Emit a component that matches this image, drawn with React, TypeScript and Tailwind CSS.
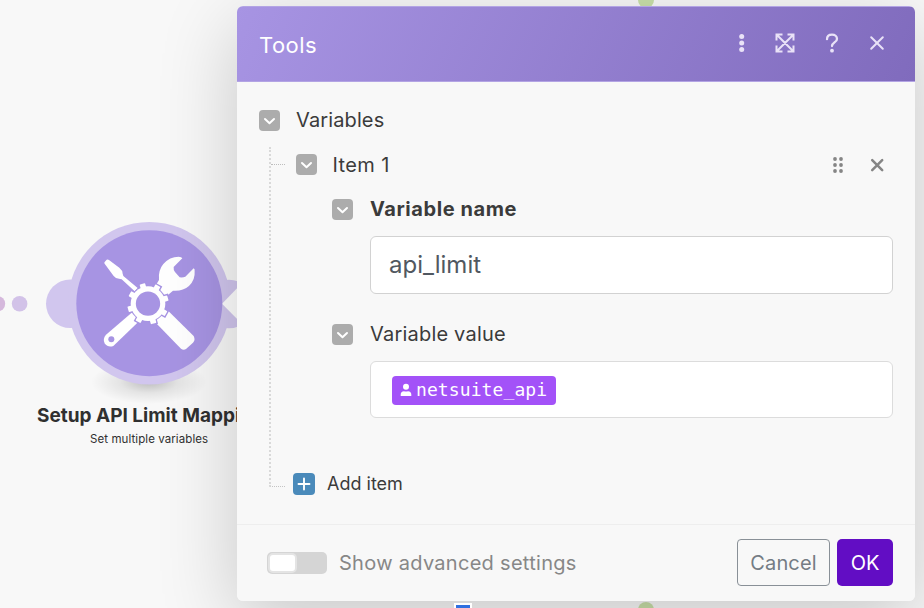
import type { ReactNode } from 'react';

const teeth = [-106, -61, -16, 29, 74, 119, 164, 209];

function Gear() {
  return (
    <g transform="translate(174 176)">
      <g fill="#a794e3" stroke="#a794e3" strokeWidth="8">
        <circle r="51" />
        {teeth.map((a) => (
          <rect key={a} x="44" y="-8.5" width="18" height="17" transform={`rotate(${a})`} />
        ))}
      </g>
      <g fill="#fff">
        <circle r="52" />
        {teeth.map((a) => (
          <rect key={a} x="44" y="-8.5" width="18" height="17" rx="2" transform={`rotate(${a})`} />
        ))}
      </g>
      <circle r="36.5" fill="#a794e3" />
    </g>
  );
}

function ToolsModule() {
  return (
    <svg className="absolute left-0 top-0" width="260" height="460" viewBox="0 0 260 460">
      <defs>
        <radialGradient id="ground">
          <stop offset="0" stopColor="#000" stopOpacity=".24" />
          <stop offset=".5" stopColor="#000" stopOpacity=".08" />
          <stop offset="1" stopColor="#000" stopOpacity="0" />
        </radialGradient>
      </defs>
      <circle cx="-2.5" cy="303.7" r="7.7" fill="#d5b8dc" />
      <circle cx="19.6" cy="303.7" r="7.8" fill="#d2c2e8" />
      <ellipse cx="149" cy="382" rx="58" ry="22" fill="url(#ground)" />
      <g fill="#d1c6ee">
        <circle cx="70.3" cy="303.7" r="24.3" />
        <circle cx="229" cy="304" r="24.3" />
        <circle cx="149.3" cy="303.2" r="81.3" />
      </g>
      <path d="M222 303.7 246 279V328Z" fill="#fff" />
      <circle cx="149.3" cy="303.2" r="73" fill="#a794e3" />
      <g transform="translate(90 245) scale(.3333)">
        <g fill="#fff">
          <path d="M44 51 50 44Q54 42 58 46L88 68Q98 76 98 86L100 93 143 129 134 139 95 103 87 101Q77 101 71 93L45 58Q41 54 44 51Z" />
          <path d="M192 130 207 105Q204 76 220 57 239 35 266 35 275 36 277 40L251 66Q250 75 255 81L269 97Q280 98 286 95L311 70Q315 72 314 79 316 105 297 123 279 139 249 137L224 158Z" />
          <path d="M132 197 48 269Q37 282 44 295 54 309 70 303L154 222Z" />
          <path d="M190 226 273 311Q281 317 289 311L309 293Q317 285 311 273L232 195Z" />
        </g>
        <circle cx="64" cy="283" r="9" fill="#a794e3" />
        <Gear />
      </g>
    </svg>
  );
}

function Toggle() {
  return (
    <span className="flex size-[21px] shrink-0 items-center justify-center rounded-[4px] bg-[#acacac] pt-[1px]">
      <svg width="13" height="8" viewBox="0 0 13 8" fill="none" stroke="#fff" strokeWidth="2" strokeLinecap="round" strokeLinejoin="round">
        <path d="M2 2 6.5 6.3 11 2" />
      </svg>
    </span>
  );
}

function Label({ children, className }: { children: ReactNode; className: string }) {
  return <span className={`whitespace-nowrap text-[20px] leading-6 text-[#3b3b3b] ${className}`}>{children}</span>;
}

function Header() {
  return (
    <header className="flex h-[76px] shrink-0 items-center justify-between border-b border-t border-[#b3a4e4] bg-linear-[115deg] from-[#a794e3] to-[#806bbd] pl-[22px] pr-[30px]">
      <h1 className="pt-[2px] text-[22px] leading-7 tracking-[0.45px] text-white">Tools</h1>
      <div className="-mt-[2px] flex items-center text-[#e9e2f7]">
        <svg className="mr-[30px]" width="6" height="20" viewBox="0 0 6 20" fill="currentColor">
          <circle cx="2.7" cy="3.4" r="2.5" />
          <circle cx="2.7" cy="10" r="2.5" />
          <circle cx="2.7" cy="16.6" r="2.5" />
        </svg>
        <svg className="mr-[30px]" width="20" height="20" viewBox="0 0 20 20" fill="none" stroke="currentColor" strokeWidth="2">
          <path d="M1.5 7.5V1.5H7.5M12.5 1.5h6V7.5M18.5 12.5v6H12.5M7.5 18.5H1.5V12.5M1.5 1.5l17 17M18.5 1.5l-17 17" />
          <path d="M1 1h4L1 5ZM19 1v4L15 1ZM19 19h-4l4-4ZM1 19v-4l4 4Z" fill="currentColor" stroke="none" />
        </svg>
        <svg className="mr-[30px]" width="14" height="20" viewBox="0 0 14 20" fill="none" stroke="currentColor" strokeWidth="2.3" strokeLinecap="round">
          <path d="M2 6.2C2 3.2 4 1.6 7 1.6s5 1.8 5 4.3c0 3.4-5 3.7-5 7.1" />
          <circle cx="7" cy="17.7" r="1.9" fill="currentColor" stroke="none" />
        </svg>
        <svg width="16" height="16" viewBox="0 0 16 16" stroke="currentColor" strokeWidth="2" strokeLinecap="round">
          <path d="M2.2 2.2l11.6 11.6M13.8 2.2 2.2 13.8" />
        </svg>
      </div>
    </header>
  );
}

function Item() {
  return (
    <div className="pt-[13px]">
      <div className="flex h-6 items-center">
        <Toggle />
        <Label className="ml-[15.5px] pt-[1px] tracking-[0.4px]">Item 1</Label>
        <div className="ml-auto mr-[8px] flex items-center pt-[2px] text-[#858585]">
          <svg className="mr-[25px]" width="12" height="18" viewBox="0 0 12 18" fill="currentColor">
            <circle cx="3" cy="3" r="1.9" />
            <circle cx="9" cy="3" r="1.9" />
            <circle cx="3" cy="9" r="1.9" />
            <circle cx="9" cy="9" r="1.9" />
            <circle cx="3" cy="15" r="1.9" />
            <circle cx="9" cy="15" r="1.9" />
          </svg>
          <svg width="16" height="16" viewBox="0 0 16 16" stroke="currentColor" strokeWidth="2.5" strokeLinecap="round">
            <path d="M3.2 3.2l10 10M13.2 3.2l-10 10" />
          </svg>
        </div>
      </div>
      <div className="pl-9 pt-[21px]">
        <div className="flex h-6 items-center">
          <Toggle />
          <Label className="ml-[17px] font-bold tracking-[0.57px]">Variable name</Label>
        </div>
        <div className="ml-[38px] mt-[15px] flex h-[58px] items-center rounded-[6px] border border-[#d2d2d2] bg-white pl-[18px] text-[24px] text-[#515860]">
          <span>api_limit</span>
        </div>
        <div className="mt-7 flex h-6 items-center">
          <Toggle />
          <Label className="ml-[17px] tracking-[0.2px]">Variable value</Label>
        </div>
        <div className="ml-[38px] mt-[15px] flex h-[57px] items-center rounded-[6px] border border-[#dcdcdc] bg-white pl-[21px]">
          <span className="mt-[1px] flex h-[29px] w-[164px] items-center rounded-[4px] bg-[#a352f8] pl-[8px] text-white">
            <svg className="-mt-[1px]" width="12" height="14" viewBox="0 0 12 14" fill="currentColor">
              <circle cx="6" cy="3.8" r="3" />
              <path d="M.7 13v-1.4Q.7 8.4 4 8.2q2 .8 4 0 3.3.2 3.3 3.4V13Z" />
            </svg>
            <span className="-mt-[1px] ml-[4px] font-['DejaVu_Sans_Mono',monospace] text-[18px] leading-6 tracking-[0.1px]">netsuite_api</span>
          </span>
        </div>
      </div>
    </div>
  );
}

function Dialog() {
  return (
    <section className="absolute left-[237px] top-[6px] flex h-[595px] w-[678px] flex-col overflow-hidden rounded-[6px] bg-[#f8f8f8]">
      <Header />
      <div className="flex-1 pl-[22px] pr-[22px] pt-[26px]">
        <div className="flex h-6 items-center">
          <Toggle />
          <Label className="ml-[16px] tracking-[0.12px]">Variables</Label>
        </div>
        <div className="flex pt-[15px]">
          <div className="ml-[10px] flex h-[340px] w-[16px] flex-col border-b border-l-2 border-dotted border-b-[#c4c4c4] border-l-[#d9d9d9]">
            <div className="h-[18px] border-b border-dotted border-[#bdbdbd]" />
          </div>
          <div className="-mt-[8px] ml-[11px] flex-1">
            <Item />
            <div className="-ml-[3px] mt-[54px] flex h-6 items-center">
              <span className="flex size-[22px] items-center justify-center rounded-[4px] bg-[#4a8aba]">
                <svg width="14" height="14" viewBox="0 0 14 14" stroke="#fff" strokeWidth="1.9" strokeLinecap="round">
                  <path d="M7 1.5v11M1.5 7h11" />
                </svg>
              </span>
              <span className="ml-3 text-[18px] leading-6 text-[#3b3b3b]">Add item</span>
            </div>
          </div>
        </div>
      </div>
      <footer className="flex h-[77px] shrink-0 items-center border-t-[1.5px] border-[#eeeeee] pl-[30px] pr-[22px]">
        <span className="flex h-[22px] w-[60px] items-center rounded-[5px] bg-[#d5d5d5]">
          <span className="ml-[1px] h-5 w-[29px] rounded-[5px] border-2 border-[#e4e4e4] bg-white" />
        </span>
        <span className="ml-3 whitespace-nowrap text-[20px] tracking-[0.29px] text-[#878787]">Show advanced settings</span>
        <button className="-mt-[1px] ml-auto h-[47px] w-[93px] rounded-[4px] border border-[#899097] pt-[1px] text-[20px] tracking-[0.15px] text-[#747c84]">Cancel</button>
        <button className="-mt-[1px] ml-[7px] h-[47px] w-[56px] rounded-[5px] bg-[#620dc4] pt-[1px] text-[20px] text-white">OK</button>
      </footer>
    </section>
  );
}

export default function App() {
  return (
    <main className="relative h-[608px] w-[924px] overflow-hidden bg-[#f8f8f8] font-['Inter',sans-serif]">
      <ToolsModule />
      <div className="absolute left-[37px] top-[404px] w-[223px] whitespace-nowrap text-[#303030]">
        <div className="text-[19px] font-bold leading-6">Setup API Limit Mapping</div>
        <div className="pl-[53px] pt-[3px] text-[11.5px] leading-4 tracking-[0.08px]">Set multiple variables</div>
      </div>
      <span className="absolute left-[638px] top-[-8px] size-[16px] rounded-full bg-[#c9e0aa]" />
      <span className="absolute left-[638px] top-[602px] size-[16px] rounded-full bg-[#c8dfa8]" />
      <div className="absolute left-[237px] top-[6px] h-[595px] w-[678px] rounded-[6px] shadow-[0_20px_80px_rgba(0,0,0,0.2)]" />
      <span className="absolute left-[454px] top-[603px] h-3 w-[18px] border-2 border-white bg-[#3070e0]" />
      <Dialog />
    </main>
  );
}
